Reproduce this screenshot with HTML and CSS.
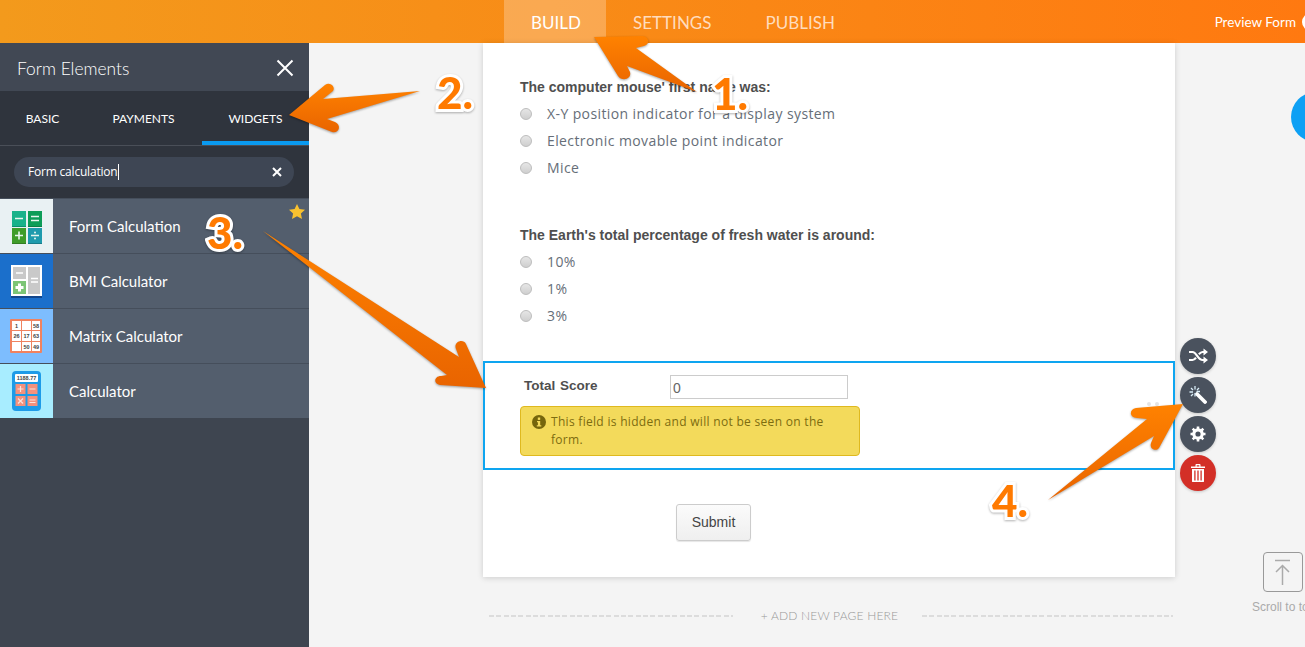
FILE: index.html
```html
<!DOCTYPE html>
<html>
<head>
    <meta charset="utf-8">
    <title>Form Builder</title>
    <link rel="stylesheet" href="styles.css">
</head>
<body>
    <div class="topbar">
        <div class="nav">
            <a class="nav-item active">BUILD</a>
            <a class="nav-item">SETTINGS</a>
            <a class="nav-item">PUBLISH</a>
        </div>
        <div class="preview">Preview Form <span class="preview-dot"></span></div>
    </div>

    <div class="workspace">
        <div class="sidebar">
            <div class="sidebar-header">
                <span>Form Elements</span>
                <svg class="close-icon" width="18" height="18" viewBox="0 0 18 18"><path d="M1.5 1.5l15 15M16.5 1.5l-15 15" stroke="#fff" stroke-width="2" fill="none"/></svg>
            </div>
            <div class="tabs">
                <div class="tab tab-basic">BASIC</div>
                <div class="tab tab-payments">PAYMENTS</div>
                <div class="tab tab-widgets">WIDGETS</div>
            </div>
            <div class="search-section">
                <div class="search">
                    <span class="search-text">Form calculation</span>
                    <svg class="search-clear" width="10" height="10" viewBox="0 0 10 10"><path d="M1 1l8 8M9 1l-8 8" stroke="#fff" stroke-width="2" fill="none"/></svg>
                </div>
            </div>
            <div class="widget-list">
                <div class="widget">
                    <div class="thumb thumb-green">
                        <svg width="53" height="55" viewBox="0 0 53 55">
                            <rect x="12" y="14" width="14" height="15" fill="#0c8f6e"/>
                            <rect x="28" y="14" width="14" height="15" fill="#0a7d46"/>
                            <rect x="12" y="31" width="14" height="15" fill="#327d22"/>
                            <rect x="28" y="31" width="14" height="15" fill="#187c8a"/>
                            <rect x="12" y="13" width="14" height="15" fill="#19b28a"/>
                            <rect x="28" y="13" width="14" height="15" fill="#0d9d58"/>
                            <rect x="12" y="30" width="14" height="15" fill="#3f9c2a"/>
                            <rect x="28" y="30" width="14" height="15" fill="#1f9bad"/>
                            <path d="M15 20.5h8M31 18.5h8M31 22.5h8M15 37.5h8M19 33.5v8M31 37.5h8" stroke="#e8f5ee" stroke-width="1.6"/>
                            <circle cx="35" cy="34.5" r="1" fill="#e8f5ee"/>
                            <circle cx="35" cy="40.5" r="1" fill="#e8f5ee"/>
                        </svg>
                    </div>
                    <span class="widget-name">Form Calculation</span>
                    <svg class="star" width="16" height="15" viewBox="0 0 16 15"><path d="M8 0l2.4 5 5.6.7-4.1 3.8 1.1 5.5L8 12.3 3 15l1.1-5.5L0 5.7 5.6 5z" fill="#f8c12f"/></svg>
                </div>
                <div class="widget">
                    <div class="thumb thumb-blue">
                        <svg width="53" height="55" viewBox="0 0 53 55">
                            <rect x="11" y="12" width="31" height="32" fill="#fff"/>
                            <rect x="11" y="43" width="31" height="2" fill="#12468c"/>
                            <rect x="13" y="14" width="13" height="12" fill="#c9c9c9"/>
                            <rect x="13" y="28" width="13" height="13" fill="#7cc576"/>
                            <rect x="28" y="14" width="12" height="27" fill="#c9c9c9"/>
                            <path d="M16 20h7M31 25.5h7M31 29h7" stroke="#fff" stroke-width="1.6"/>
                            <path d="M19.5 30.500v8M15.500 34.500h8" stroke="#fff" stroke-width="3"/>
                        </svg>
                    </div>
                    <span class="widget-name">BMI Calculator</span>
                </div>
                <div class="widget">
                    <div class="thumb thumb-sky">
                        <svg width="53" height="55" viewBox="0 0 53 55">
                            <rect x="10" y="11" width="32" height="34" rx="1" fill="#f0825f"/>
                            <g fill="#fff">
                                <rect x="12" y="13" width="9" height="9"/><rect x="22" y="13" width="9" height="9"/><rect x="32" y="13" width="8" height="9"/>
                                <rect x="12" y="23" width="9" height="10"/><rect x="22" y="23" width="9" height="10"/><rect x="32" y="23" width="8" height="10"/>
                                <rect x="12" y="34" width="9" height="9"/><rect x="22" y="34" width="9" height="9"/><rect x="32" y="34" width="8" height="9"/>
                            </g>
                            <g class="thumb-text" font-size="5.500" text-anchor="middle">
                                <text x="16.500" y="20">1</text><text x="36" y="20">58</text>
                                <text x="16.500" y="30">26</text><text x="26.500" y="30">17</text><text x="36" y="30">63</text>
                                <text x="26.500" y="41">50</text><text x="36" y="41">49</text>
                            </g>
                        </svg>
                    </div>
                    <span class="widget-name">Matrix Calculator</span>
                </div>
                <div class="widget">
                    <div class="thumb thumb-cyan">
                        <svg width="53" height="55" viewBox="0 0 53 55">
                            <rect x="12" y="8" width="29" height="40" rx="4" fill="#1e9be8"/>
                            <rect x="15" y="11" width="23" height="8" rx="1" fill="#fff"/>
                            <text class="thumb-text" x="26.500" y="17" font-size="5.500" text-anchor="middle">1188.77</text>
                            <g fill="#f5917d">
                                <rect x="15.500" y="21" width="10" height="10"/><rect x="27.500" y="21" width="10" height="10"/>
                                <rect x="15.500" y="33" width="10" height="10"/><rect x="27.500" y="33" width="10" height="10"/>
                            </g>
                            <path d="M17.500 26h6M20.500 23v6M29.500 26h6M18 35.500l5 5M23 35.500l-5 5M29.500 37h6M29.500 39.500h6" stroke="#fde3dc" stroke-width="1.200"/>
                        </svg>
                    </div>
                    <span class="widget-name">Calculator</span>
                </div>
            </div>
        </div>

        <div class="canvas">
            <div class="form-card">
                <div class="question">
                    <div class="question-label">The computer mouse' first name was:</div>
                    <label class="option"><input type="radio" name="q1"><span>X-Y position indicator for a display system</span></label>
                    <label class="option"><input type="radio" name="q1"><span>Electronic movable point indicator</span></label>
                    <label class="option"><input type="radio" name="q1"><span>Mice</span></label>
                </div>
                <div class="question question-second">
                    <div class="question-label">The Earth's total percentage of fresh water is around:</div>
                    <label class="option"><input type="radio" name="q2"><span>10%</span></label>
                    <label class="option"><input type="radio" name="q2"><span>1%</span></label>
                    <label class="option"><input type="radio" name="q2"><span>3%</span></label>
                </div>

                <div class="selected-field">
                    <div class="field-row">
                        <label class="field-label">Total Score</label>
                        <input class="field-input" type="text" value="0">
                    </div>
                    <div class="hidden-note">
                        <svg class="note-icon" width="14" height="14" viewBox="0 0 14 14"><circle cx="7" cy="7" r="7" fill="#75650c"/><rect x="5.800" y="2.500" width="2.400" height="2.400" fill="#f3da5b"/><path d="M5 6h3.200v4.200H9.300v1.300H4.800v-1.300H5.900V7.300H5z" fill="#f3da5b"/></svg>
                        <span>This field is hidden and will not be seen on the form.</span>
                    </div>
                    <div class="drag-dots"><i></i><i></i></div>
                    <div class="field-tools">
                        <div class="tool">
                            <svg width="20" height="16" viewBox="0 0 20 16"><path d="M1 4h3.500c4 0 5.500 8 10 8H17M1 12h3.500c1.500 0 2.500-1 3.500-2.400M10.800 6.200C12 5 13 4 14.500 4H17" stroke="#fff" stroke-width="2.200" fill="none"/><path d="M15.500 0.500L20 4l-4.500 3.500zM15.500 8.500L20 12l-4.500 3.500z" fill="#fff"/></svg>
                        </div>
                        <div class="tool">
                            <svg width="18" height="18" viewBox="0 0 18 18"><path d="M8 8l8 8" stroke="#fff" stroke-width="3.800" stroke-linecap="round"/><path d="M6 0v3.500M0.500 6H4M6 7v3.500M7.500 5.500H11M2 2l2 2M10 2L8 4M2 10l2-2" stroke="#d8ecf7" stroke-width="1.300"/></svg>
                        </div>
                        <div class="tool">
                            <svg width="16" height="16" viewBox="0 0 16 16"><circle cx="8" cy="8" r="4.200" fill="none" stroke="#fff" stroke-width="3.200"/><path d="M8 0.500v3M8 12.500v3M0.500 8h3M12.500 8h3M2.700 2.700l2.100 2.100M11.200 11.200l2.100 2.100M13.300 2.700l-2.100 2.100M4.800 11.200l-2.100 2.100" stroke="#fff" stroke-width="2.600"/></svg>
                        </div>
                        <div class="tool tool-delete">
                            <svg width="14" height="18" viewBox="0 0 14 18"><path d="M0 2.500h14v1.500H0zM4.500 2.500V1c0-.6.400-1 1-1h3c.6 0 1 .4 1 1v1.500H8.300V1.200H5.700v1.300z" fill="#fff"/><path d="M1 5h12v12.500c0 .3-.2.500-.5.500h-11c-.3 0-.5-.2-.5-.5z" fill="#fff"/><path d="M3.900 6.500v10M7 6.500v10M10.100 6.500v10" stroke="#d32f27" stroke-width="1.300"/></svg>
                        </div>
                    </div>
                </div>

                <button class="submit-btn" type="button">Submit</button>
            </div>

            <div class="add-page">
                <div class="dash dash-left"></div>
                <span class="add-page-text">+ ADD NEW PAGE HERE</span>
                <div class="dash dash-right"></div>
            </div>

            <div class="bubble"></div>
            <div class="scroll-top">
                <div class="scroll-box">
                    <svg width="20" height="26" viewBox="0 0 20 26"><path d="M2 1.500h15M9.500 26V7M3 13l6.500-6.500L16 13" stroke="#aaa" stroke-width="1.500" fill="none"/></svg>
                </div>
                <div class="scroll-text">Scroll to top</div>
            </div>
        </div>
    </div>

    <!-- callouts drawn over the screenshot -->
    <svg class="arrows" width="1305" height="647" viewBox="0 0 1305 647">
        <defs>
            <linearGradient id="arrow-fill" x1="0" y1="0" x2="0" y2="1">
                <stop offset="0" stop-color="#ff8200"/>
                <stop offset="1" stop-color="#e96400"/>
            </linearGradient>
        </defs>
        <g class="arrow-group" fill="url(#arrow-fill)">
            <path d="M594 37L642 36C649 36 651 44 644 46L636 48L697 92L627 66L630 72C632 79 622 82 618 76Z"/>
            <path d="M289 115L325 85C330 81 336 87 333 91L323 99L420 91L327 119L335 122C342 125 339 134 332 132Z"/>
            <path d="M263 231L459 357L456 349C453 342 463 338 466 344L486 388L440 385C433 384 434 376 441 376L447 375Z"/>
            <path d="M1183 404L1136 408C1129 409 1129 418 1137 418L1147 419L1048 500L1154 436L1151 443C1149 449 1156 452 1159 448Z"/>
        </g>
    </svg>
    <div class="step step-1">1.</div>
    <div class="step step-2">2.</div>
    <div class="step step-3">3.</div>
    <div class="step step-4">4.</div>
</body>
</html>
```

FILE: styles.css
```css
* {
    box-sizing: border-box;
}

html, body {
    height: 647px;
}

body {
    margin: 0;
    position: relative;
    overflow: hidden;
    display: flex;
    flex-direction: column;
    font-family: Lato, "Open Sans", sans-serif;
    background: #f4f4f4;
    color: #555;
}

.topbar {
    height: 43px;
    flex: none;
    display: flex;
    justify-content: space-between;
    padding-left: 504px;
    background: linear-gradient(90deg, #f39a1c 0%, #ff7910 100%);
}

.nav {
    display: flex;
}

.nav-item {
    display: flex;
    align-items: center;
    padding: 1px 27px 0;
    font-size: 17px;
    color: #ffdcbd;
}

.nav-item.active {
    width: 102px;
    color: #fff;
    background: rgba(255, 255, 255, 0.25);
}

.preview {
    display: flex;
    align-items: center;
    gap: 6px;
    margin-right: -15px;
    font-size: 13.5px;
    color: #fff;
}

.preview-dot {
    width: 18px;
    height: 18px;
    border-radius: 50%;
    background: #fff;
}

.workspace {
    flex: 1;
    display: flex;
    min-height: 0;
}

.sidebar {
    width: 309px;
    flex: none;
    background: #3e4550;
}

.sidebar-header {
    height: 48px;
    display: flex;
    align-items: center;
    justify-content: space-between;
    padding: 2px 15px 0 17px;
    font-size: 17.4px;
    font-weight: 300;
    color: #fff;
    background: #414854;
}

.tabs {
    height: 55px;
    display: flex;
    background: #2f343d;
    border-bottom: 1px solid #4a4f58;
}

.tab {
    display: flex;
    align-items: center;
    justify-content: center;
    height: 54px;
    font-size: 12px;
    color: #fff;
}

.tab-basic {
    width: 85px;
}

.tab-payments {
    width: 117px;
}

.tab-widgets {
    width: 107px;
    border-bottom: 4px solid #0a9af0;
    padding-top: 4px;
}

.search-section {
    height: 52px;
    padding: 11px 15px 0 14px;
    background: #2f343d;
}

.search {
    height: 30px;
    display: flex;
    align-items: center;
    justify-content: space-between;
    padding: 0 12px 0 14px;
    border-radius: 15px;
    background: #3e4654;
}

.search-text {
    padding-right: 1px;
    border-right: 1px solid #fff;
    font-family: "Open Sans", sans-serif;
    font-size: 12px;
    line-height: 16px;
    letter-spacing: -0.2px;
    color: #fff;
}

.widget {
    position: relative;
    height: 55px;
    display: flex;
    align-items: center;
    gap: 16px;
    background: #535e6d;
    border-top: 1px solid #454e5b;
}

.thumb {
    width: 53px;
    height: 54px;
    flex: none;
    overflow: hidden;
}

.thumb svg {
    display: block;
    margin-top: -1px;
}

.thumb-green {
    background: #e9f1f3;
}

.thumb-blue {
    background: #1b6fcb;
}

.thumb-sky {
    background: #7dbdfe;
}

.thumb-cyan {
    background: #a8edff;
}

.thumb-text {
    font-family: "Liberation Sans", sans-serif;
    font-weight: 700;
    fill: #444;
}

.widget-name {
    font-size: 15px;
    color: #fff;
}

.star {
    position: absolute;
    top: 5px;
    right: 4px;
}

.canvas {
    position: relative;
    flex: 1;
    padding-left: 174px;
}

.form-card {
    width: 692px;
    padding-top: 35px;
    padding-bottom: 36px;
    background: #fff;
    box-shadow: 0 1px 6px rgba(0, 0, 0, 0.16);
}

.question {
    padding-left: 37px;
}

.question-second {
    margin-top: 45px;
}

.question-label {
    margin-bottom: 4px;
    font-family: "Liberation Sans", sans-serif;
    font-size: 14px;
    font-weight: 700;
    line-height: 18px;
    color: #4f4f4f;
}

.option {
    height: 27px;
    display: flex;
    align-items: center;
    gap: 15px;
    font-family: "Open Sans", sans-serif;
    font-size: 14px;
    letter-spacing: 0.4px;
    color: #666e78;
}

.option input {
    appearance: none;
    width: 12px;
    height: 12px;
    margin: 0;
    border: 1px solid #bdbdbd;
    border-radius: 50%;
    background: linear-gradient(#e6e6e6, #cfcfcf);
}

.selected-field {
    position: relative;
    height: 109px;
    margin-top: 32px;
    padding: 12px 0 0 35px;
    border: 2px solid #0ea5f0;
}

.field-row {
    display: flex;
}

.field-label {
    width: 150px;
    padding: 3px 0 0 4px;
    font-family: "Liberation Sans", sans-serif;
    font-size: 13.5px;
    font-weight: 700;
    word-spacing: 1px;
    color: #4f4f4f;
}

.field-input {
    width: 178px;
    height: 24px;
    padding: 2px 2px 0;
    border: 1px solid #ccc;
    font-family: "Liberation Sans", sans-serif;
    font-size: 14px;
    color: #666;
}

.hidden-note {
    width: 340px;
    height: 50px;
    display: flex;
    gap: 5px;
    margin-top: 7px;
    padding: 6px 12px 0 11px;
    border: 1px solid #dfb91f;
    border-radius: 4px;
    background: #f3da5b;
    font-family: "Open Sans", sans-serif;
    font-size: 12px;
    line-height: 18px;
    letter-spacing: 0.3px;
    color: #7d6c10;
}

.note-icon {
    flex: none;
    margin-top: 2px;
}

.drag-dots {
    position: absolute;
    top: 39px;
    right: 14px;
    display: flex;
    gap: 4px;
}

.drag-dots i {
    width: 4px;
    height: 4px;
    border-radius: 50%;
    background: #e4e4e4;
}

.field-tools {
    position: absolute;
    top: -25px;
    left: 695px;
    display: flex;
    flex-direction: column;
    gap: 3px;
}

.tool {
    width: 36px;
    height: 36px;
    display: flex;
    align-items: center;
    justify-content: center;
    border-radius: 50%;
    background: #4a525e;
    box-shadow: 0 1px 3px rgba(0, 0, 0, 0.2);
}

.tool-delete {
    background: #d32f27;
}

.submit-btn {
    display: block;
    width: 75px;
    height: 37px;
    margin: 34px 0 0 193px;
    padding: 0 0 2px;
    border: 1px solid #ccc;
    border-radius: 3px;
    background: linear-gradient(#fbfbfb, #efefef);
    box-shadow: 0 1px 1px rgba(0, 0, 0, 0.1);
    font-family: "Liberation Sans", sans-serif;
    font-size: 14px;
    color: #444;
}

.add-page {
    width: 692px;
    display: flex;
    align-items: center;
    margin-top: 31px;
    padding-left: 6px;
}

.dash {
    height: 2px;
    background: repeating-linear-gradient(90deg, #dcdcdc 0, #dcdcdc 5px, transparent 5px, transparent 7.33px);
}

.dash-left {
    width: 244px;
}

.dash-right {
    width: 251px;
}

.add-page-text {
    width: 189px;
    padding-left: 4px;
    text-align: center;
    font-size: 12px;
    font-weight: 300;
    letter-spacing: 0.2px;
    color: #999;
}

.bubble {
    position: absolute;
    top: 49px;
    left: 982px;
    width: 50px;
    height: 50px;
    border-radius: 50%;
    background: #0ea0f4;
}

.scroll-top {
    position: absolute;
    top: 509px;
    left: 943px;
    white-space: nowrap;
}

.scroll-box {
    width: 40px;
    height: 40px;
    margin-left: 11px;
    display: flex;
    align-items: center;
    justify-content: center;
    border: 1px solid #999;
    border-radius: 4px;
}

.scroll-text {
    margin-top: 8px;
    font-family: "Liberation Sans", sans-serif;
    font-size: 12px;
    color: #aaa;
}

.arrows {
    position: absolute;
    top: 0;
    left: 0;
    pointer-events: none;
}

.arrow-group {
    filter: drop-shadow(0 1px 1px rgba(0, 0, 0, 0.35));
}

.step {
    position: absolute;
    font-family: Lato, sans-serif;
    font-size: 44px;
    font-weight: 900;
    line-height: 46px;
    color: #ff7a00;
    -webkit-text-stroke: 6px #fff;
    paint-order: stroke fill;
    filter: drop-shadow(0 1px 1px rgba(0, 0, 0, 0.3));
}

.step-1 {
    top: 70px;
    left: 712px;
}

.step-2 {
    top: 69px;
    left: 437px;
}

.step-3 {
    top: 209px;
    left: 207px;
}

.step-4 {
    top: 477px;
    left: 992px;
}
```
